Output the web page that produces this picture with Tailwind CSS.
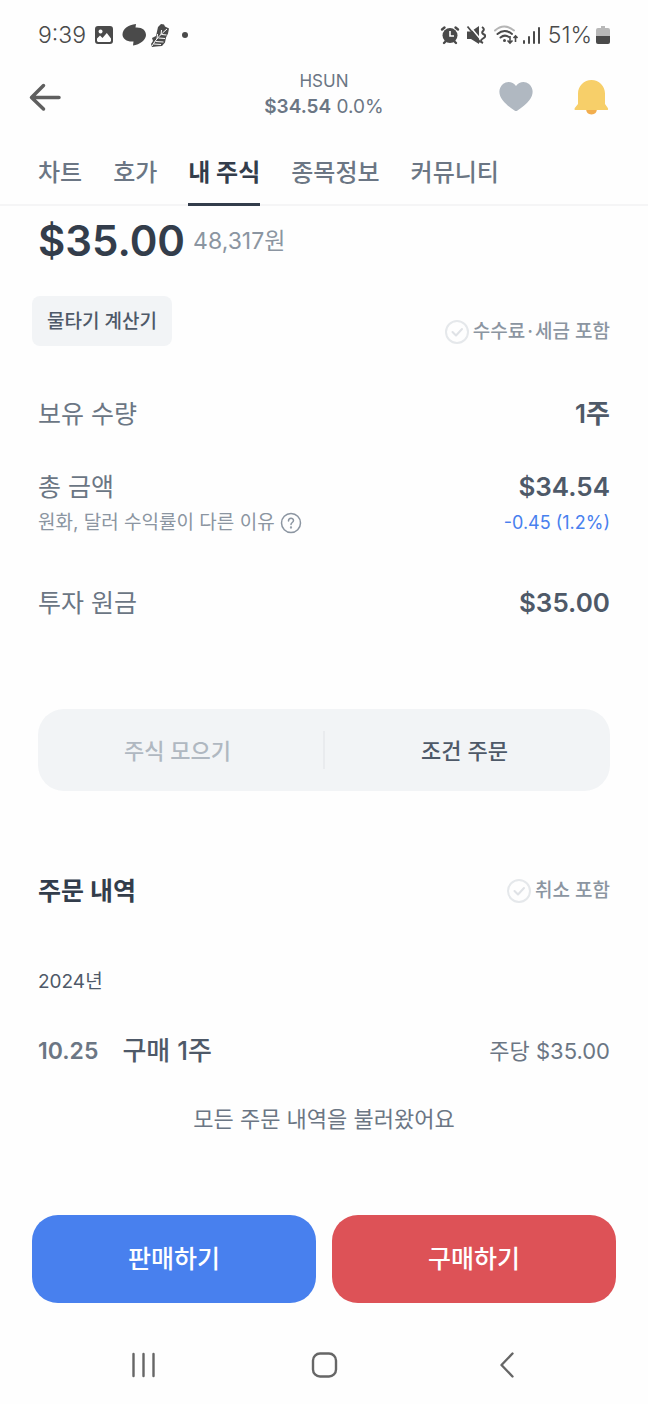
<!DOCTYPE html>
<html lang="ko">
<head>
<meta charset="utf-8">
<meta name="viewport" content="width=device-width, initial-scale=1">
<title>HSUN 내 주식</title>
<script src="https://cdn.jsdelivr.net/npm/@tailwindcss/browser@4"></script>
</head>
<body class="min-h-screen bg-[#fefefe] font-['Inter','Noto_Sans_CJK_KR',sans-serif] text-[#4e5968]">
<div class="flex min-h-screen flex-col">

  <!-- Status bar -->
  <div class="flex h-[70px] items-center justify-between px-[38px] text-[#4a4a4a]">
    <div class="flex items-center gap-2">
      <span class="text-[23px] font-light leading-8">9:39</span>
      <svg class="h-5 w-5" viewBox="0 0 20 20" aria-hidden="true"><path fill="currentColor" fill-rule="evenodd" d="M4 1h12a3 3 0 0 1 3 3v12a3 3 0 0 1-3 3H4a3 3 0 0 1-3-3V4a3 3 0 0 1 3-3ZM3 13.500V16l1 1h12l1-1v-2.500L12.800 8 8.500 13 6 10.500ZM6.500 4.500a2 2 0 1 0 .1 0Z"/></svg>
      <svg class="h-6 w-6" viewBox="0 0 24 24" aria-hidden="true"><path fill="currentColor" d="M14 1 13.500 4.500C20 4 24 7 24 12c0 5-6 9.500-13 10.500l.5-4C5 19 .5 16 .5 11.500.5 6.500 6 1.500 14 1Z"/></svg>
      <svg class="-ml-1 h-6 w-5" viewBox="0 0 20 24" aria-hidden="true"><path fill="currentColor" d="M8 4 11 1l3 .5 1 2 4 2-1 5-2 4-1 5-3 3.500-6 .5-4 .5-1-3 2-3-1-3 4-2Z"/><path fill="none" stroke="#fefefe" stroke-width="1" d="M2 23C6 16 11 11 17 6M7 16l.5-5M11 12l.5-5M5.500 18.500l8 .5M8.500 15l6.500.5M12 11.500l4.500.5M4 21l7 .5"/></svg>
      <span class="ml-1 size-[6px] rounded-full bg-[#4a4a4a]"></span>
    </div>
    <div class="flex items-center gap-1">
      <svg class="h-5 w-5" viewBox="0 0 20 20" aria-hidden="true"><circle cx="10" cy="10.500" r="7.500" fill="currentColor"/><path stroke="currentColor" stroke-width="2.400" stroke-linecap="round" d="M2 4.500 4.500 2.500M18 4.500 15.500 2.500M4 18l2-2M16 18l-2-2"/><path fill="none" stroke="#fefefe" stroke-width="1.600" d="M10 6v5h4"/></svg>
      <svg class="ml-0.5 h-5 w-5" viewBox="0 0 20 20" aria-hidden="true"><path fill="currentColor" d="M1 6.500h4l8-5.500v18l-8-5H1Z"/><path stroke="#fefefe" stroke-width="1.500" d="m3.500 1 12.500 15"/><path stroke="currentColor" stroke-width="1.700" d="m1.500 1.500 13 16"/><path fill="none" stroke="currentColor" stroke-width="2" d="M16 2q3 2 1 4t1 3.500-1 4 0 4.500"/></svg>
      <svg class="ml-1 h-5 w-6" viewBox="0 0 24 20" aria-hidden="true"><g fill="none" stroke-linecap="round" stroke-width="2"><path stroke="#b5b5b5" d="M1 5.500q9-8 19 0"/><path stroke="currentColor" d="M3.500 9q7-6 14.500 0M6.500 12.500q4-3.500 8.500-.5"/></g><circle cx="10.500" cy="15.500" r="1.500" fill="currentColor"/><path fill="none" stroke="currentColor" stroke-width="1.600" d="M16 11v7m-2.500-2.500L16 18l2.500-2.500M21.500 17v-6M19.500 13l2-2 2 2"/></svg>
      <svg class="h-5 w-[18px]" viewBox="0 0 18 20" aria-hidden="true"><path stroke="currentColor" stroke-width="2" stroke-linecap="round" d="M2 18v-2M7 18v-6M12 18V7M17 18V3"/></svg>
      <span class="ml-1 text-[23px] font-light leading-8">51%</span>
      <svg class="h-5 w-[14px]" viewBox="0 0 14 20" aria-hidden="true"><path fill="#b8b8b8" d="M5 1h4v2h3q2 0 2 2v6H0V5q0-2 2-2h3Z"/><path fill="currentColor" d="M0 11h14v6q0 2-2 2H2q-2 0-2-2Z"/></svg>
    </div>
  </div>

  <!-- Title bar -->
  <header class="grid h-[54px] grid-cols-3 items-center px-7">
    <button type="button" aria-label="뒤로" class="w-9">
      <svg class="h-9 w-9" viewBox="0 0 36 36" fill="none" stroke="#5f5f5f" stroke-width="3.500" stroke-linecap="round" stroke-linejoin="round"><path d="M15.500 6.500 3.500 18.500l12 11.500M3.500 18.500h27.500"/></svg>
    </button>
    <h1 class="-mt-1 text-center text-[#6b7684]">
      <span class="block text-[17px] leading-6">HSUN</span>
      <span class="block text-[19px] leading-7"><span class="font-semibold">$34.54</span> 0.0%</span>
    </h1>
    <div class="flex items-center justify-end gap-9 pr-2">
      <button type="button" aria-label="관심 종목">
        <svg class="h-10 w-10" viewBox="0 0 40 40"><path fill="#b0b8c1" d="M20 9C23 4.500 29 3.500 33 7c5 4.500 4.500 11 .5 16-3 4-8 8-12 10.500q-1.500 1-3 0c-4-2.500-9-6.500-12-10.500C2.500 18 2 11.500 7 7c4-3.500 10-2.500 13 2Z"/></svg>
      </button>
      <button type="button" aria-label="알림">
        <svg class="h-10 w-10" viewBox="0 0 40 40"><path fill="#f2ae4e" d="M14 31h11q0 6.500-5.500 6.500T14 31Z"/><path fill="#f7cf69" d="M19.500 3C27 3 33 9 33 16.500v10.500l2.800 4q1 2-1 2h-31q-2 0-1-2L6 27V16.500C6 9 12 3 19.500 3Z"/></svg>
      </button>
    </div>
  </header>

  <!-- Tabs -->
  <nav class="mt-4 flex h-[66px] gap-[31px] border-b-2 border-[#f5f5f6] px-[38px] text-[24px] font-medium leading-[66px] text-[#6b7684]">
    <a href="#chart">차트</a>
    <a href="#quote">호가</a>
    <a href="#mine" aria-current="page" class="h-[66px] border-b-3 border-[#333d4b] font-bold text-[#333d4b]">내 주식</a>
    <a href="#info">종목정보</a>
    <a href="#community">커뮤니티</a>
  </nav>

  <main class="flex flex-col px-[38px]">
    <div class="mt-2 flex items-center gap-2">
      <span class="text-[42px] font-semibold leading-[54px] text-[#333d4b]">$35.00</span>
      <span class="text-[23px] leading-8 text-[#8b95a1]">48,317원</span>
    </div>

    <div class="mt-7 flex items-start justify-between">
      <button type="button" class="-ml-1.5 h-[50px] rounded-lg bg-[#f2f4f6] px-[15px] pt-0.5 text-[19px] font-medium text-[#4e5968]">물타기 계산기</button>
      <label class="mt-[22px] flex items-center gap-1 text-[19px] font-medium leading-7 text-[#8b95a1]">
        <span class="grid place-items-center">
          <input type="checkbox" class="col-start-1 row-start-1 size-6 appearance-none rounded-full border-2 border-[#e5e8eb]">
          <svg class="pointer-events-none col-start-1 row-start-1 size-6" viewBox="0 0 24 24" fill="none" stroke="#dfe2e6" stroke-width="2" stroke-linecap="round" stroke-linejoin="round"><path d="m7.500 12 3.500 3.500 6-6.500"/></svg>
        </span>
        <span>수수료<span class="px-0.5">·</span>세금 포함</span>
      </label>
    </div>

    <dl class="mt-[50px]">
      <div class="flex items-center justify-between leading-9">
        <dt class="text-[25px] text-[#6b7684]">보유 수량</dt>
        <dd class="text-[26px] font-semibold">1주</dd>
      </div>
      <div class="mt-[37px] flex items-center justify-between leading-9">
        <dt class="text-[25px] text-[#6b7684]">총 금액</dt>
        <dd class="text-[26px] font-semibold">$34.54</dd>
      </div>
      <div class="flex items-center justify-between leading-9">
        <dt class="flex items-center gap-1 text-[19px] text-[#8b95a1]">원화, 달러 수익률이 다른 이유
          <button type="button" aria-label="도움말">
            <svg class="size-6" viewBox="0 0 24 24" fill="none" stroke="#8b95a1" stroke-width="1.500" stroke-linecap="round"><circle cx="12" cy="12" r="9.500"/><path d="M9.500 10c0-3.500 5-3.500 5-.5 0 2-2.500 2-2.500 4"/><circle cx="12" cy="16.500" r=".4"/></svg>
          </button>
        </dt>
        <dd class="text-[18px] text-[#4880ee]">-0.45 (1.2%)</dd>
      </div>
      <div class="mt-11 flex items-center justify-between leading-9">
        <dt class="text-[25px] text-[#6b7684]">투자 원금</dt>
        <dd class="text-[26px] font-semibold">$35.00</dd>
      </div>
    </dl>

    <div class="mt-[88px] flex h-[82px] items-center rounded-[26px] bg-[#f2f4f6] text-[22px] font-medium">
      <button type="button" disabled class="h-full flex-1 pt-0.5 pr-1.5 text-[#b0b8c1]">주식 모으기</button>
      <span class="h-[38px] w-0.5 bg-[#e9ebee]"></span>
      <button type="button" class="h-full flex-1 pt-0.5 pr-1.5 text-[#4e5968]">조건 주문</button>
    </div>

    <div class="mt-[82px] flex items-center justify-between">
      <h2 class="text-[25px] font-bold leading-9 text-[#333d4b]">주문 내역</h2>
      <label class="flex items-center gap-1 text-[19px] font-medium leading-7 text-[#8b95a1]">
        <span class="grid place-items-center">
          <input type="checkbox" class="col-start-1 row-start-1 size-6 appearance-none rounded-full border-2 border-[#e5e8eb]">
          <svg class="pointer-events-none col-start-1 row-start-1 size-6" viewBox="0 0 24 24" fill="none" stroke="#dfe2e6" stroke-width="2" stroke-linecap="round" stroke-linejoin="round"><path d="m7.500 12 3.500 3.500 6-6.500"/></svg>
        </span>
        취소 포함
      </label>
    </div>

    <h3 class="mt-[55px] text-[19px] leading-9 text-[#4e5968]">2024년</h3>
    <div class="mt-[33px] flex items-center leading-9">
      <span class="text-[23px] font-semibold text-[#6b7684]">10.25</span>
      <span class="ml-6 text-[26px] font-medium">구매 1주</span>
      <span class="ml-auto text-[22px] text-[#6b7684]">주당 $35.00</span>
    </div>
    <p class="mt-8 text-center text-[22px] leading-9 text-[#6b7684]">모든 주문 내역을 불러왔어요</p>
  </main>

  <div class="mt-auto">
    <!-- Order actions -->
    <div class="grid grid-cols-2 gap-4 px-8 text-[25px] font-medium text-white">
      <button type="button" class="h-[88px] rounded-[26px] bg-[#4880ee] pt-0.5">판매하기</button>
      <button type="button" class="h-[88px] rounded-[26px] bg-[#dd5257] pt-0.5">구매하기</button>
    </div>

    <!-- System navigation -->
    <div class="mt-[23px] mb-px grid h-[77px] grid-cols-3 place-items-center px-[52px]">
      <button type="button" aria-label="최근 앱"><svg class="size-8" viewBox="0 0 32 32" stroke="#666" stroke-width="2.400" stroke-linecap="round"><path d="M6.500 5v22M16.500 5v22M26.500 5v22"/></svg></button>
      <button type="button" aria-label="홈"><svg class="size-8" viewBox="0 0 32 32" fill="none" stroke="#666" stroke-width="2.400"><rect x="5" y="4.500" width="23" height="23" rx="7"/></svg></button>
      <button type="button" aria-label="이전"><svg class="size-8" viewBox="0 0 32 32" fill="none" stroke="#666" stroke-width="2.400" stroke-linecap="round" stroke-linejoin="round"><path d="M23.500 4.500 12.500 16l11 11.500"/></svg></button>
    </div>
  </div>
</div>
</body>
</html>
